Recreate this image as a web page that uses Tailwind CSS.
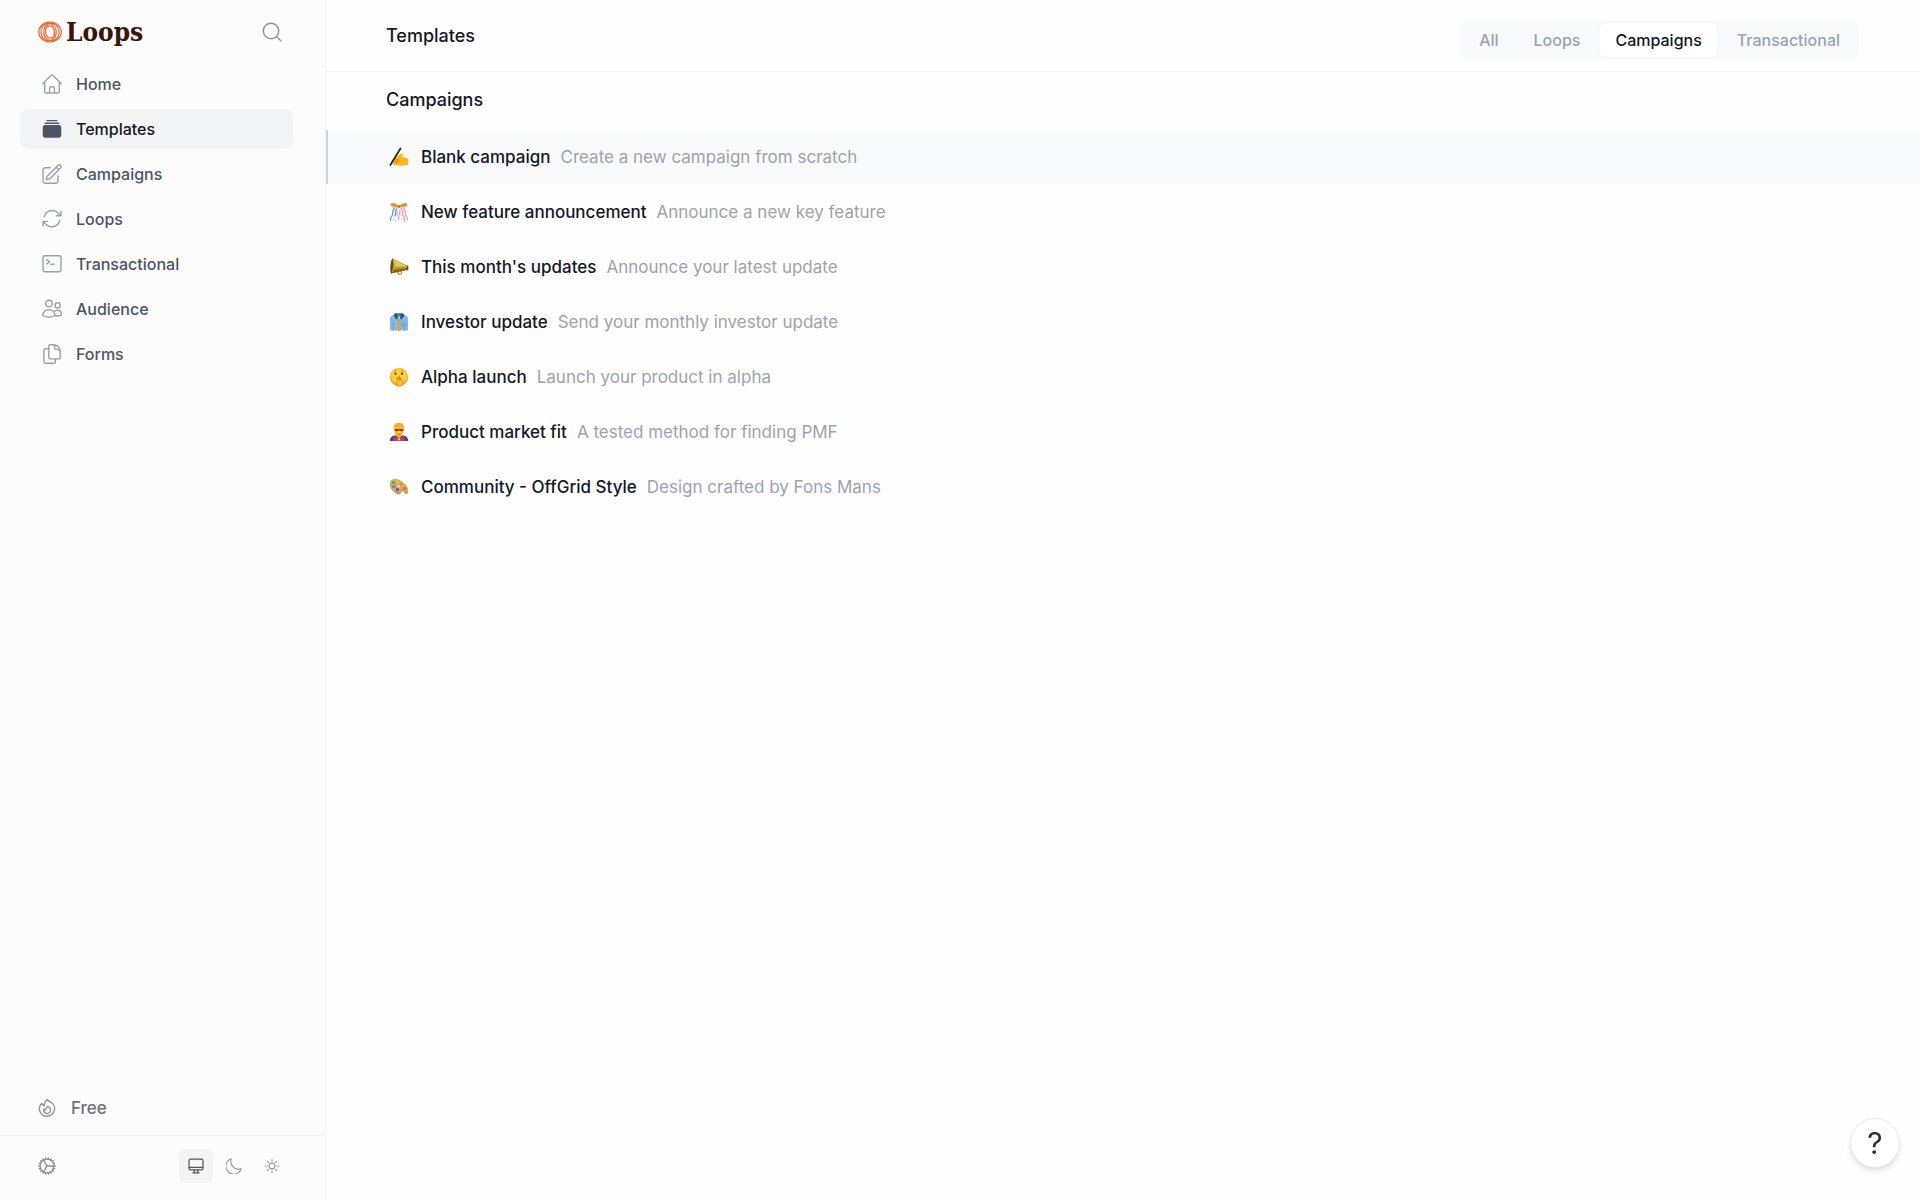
<!DOCTYPE html>
<html lang="en">
<head>
    <meta charset="UTF-8">
    <meta name="viewport" content="width=device-width, initial-scale=1.0">
    <title>Templates - Loops</title>
    <script src="https://cdn.jsdelivr.net/npm/@tailwindcss/browser@4"></script>
</head>
<body class="flex min-h-screen bg-[#fefefe] font-['Inter',sans-serif] text-[17px] leading-6 font-medium text-[#111827]">

    <!-- Sidebar -->
    <aside class="flex w-[326px] shrink-0 flex-col border-r border-[#f3f4f6] bg-[#fcfcfd]">
        <div class="flex h-16 items-center justify-between pl-[38px] pr-9">
            <a href="#" class="flex items-center gap-1">
                <svg class="h-6 w-6" viewBox="0 0 24 24" fill="none" stroke="#ea6229" stroke-width="1.2">
                    <ellipse cx="12" cy="12" rx="11.3" ry="10"/>
                    <ellipse cx="10.6" cy="12" rx="7.700" ry="8.800" transform="rotate(-8 10.6 12)"/>
                    <ellipse cx="13.4" cy="12" rx="7.700" ry="8.800" transform="rotate(-8 13.4 12)"/>
                    <ellipse cx="12" cy="12" rx="4.500" ry="6.200" transform="rotate(-10 12 12)"/>
                </svg>
                <span class="font-['DejaVu_Serif_Condensed','DejaVu_Serif',serif] text-[26px] font-bold text-[#3b1408]">Loops</span>
            </a>
            <button type="button" aria-label="Search" class="flex h-[34px] w-[34px] items-center justify-center text-[#9095a0]">
                <svg class="h-5 w-5" viewBox="0 0 20 20" fill="none" stroke="currentColor" stroke-width="1.5" stroke-linecap="round">
                    <circle cx="9" cy="9" r="7.7"/><path d="m14.5 14.5 4.3 4.3"/>
                </svg>
            </button>
        </div>

        <nav class="flex flex-col gap-[5px] pl-5 pr-8 text-base text-[#4b5563]">
            <a href="#" class="flex h-10 items-center gap-[14px] rounded-lg px-[22px]">
                <svg class="h-5 w-5 text-[#9ca0ab]" viewBox="0 0 20 20" fill="none" stroke="currentColor" stroke-width="1.4" stroke-linecap="round" stroke-linejoin="round">
                    <path d="m.8 9.7 8.4-8.4a1.1 1.1 0 0 1 1.6 0l8.4 8.4M2.7 8v9.8c0 .7.5 1.2 1.2 1.2h12.2c.7 0 1.2-.5 1.2-1.2V8M7.6 19v-5.1c0-.6.5-1.1 1.1-1.1h2.6c.6 0 1.1.5 1.1 1.1V19"/>
                </svg>
                Home
            </a>
            <a href="#" class="flex h-10 items-center gap-[14px] rounded-lg bg-[#f3f4f6] px-[22px] text-[#111827]">
                <svg class="h-5 w-5" viewBox="0 0 20 20" fill="#4b5565">
                    <rect x="4.5" y="1" width="11" height="1.2" rx=".6"/>
                    <rect x="2.5" y="3.5" width="15" height="1.4" rx=".7"/>
                    <rect x=".7" y="6.1" width="18.6" height="12.6" rx="2.7"/>
                </svg>
                Templates
            </a>
            <a href="#" class="flex h-10 items-center gap-[14px] rounded-lg px-[22px]">
                <svg class="h-5 w-5 text-[#9ca0ab]" viewBox="0 0 20 20" fill="none" stroke="currentColor" stroke-width="1.4" stroke-linecap="round" stroke-linejoin="round">
                    <path d="M8.3 3.8H3.2A2.2 2.2 0 0 0 1 6v11a2.2 2.2 0 0 0 2.2 2.2h10.6A2.2 2.2 0 0 0 16 17v-5"/>
                    <path d="M15.9 1.5a1.8 1.8 0 0 1 2.6 2.6L8.7 13.9a5 5 0 0 1-1.8 1.1l-2.8.9.9-2.8a5 5 0 0 1 1.1-1.8zM14.2 3.2l2.6 2.6"/>
                </svg>
                Campaigns
            </a>
            <a href="#" class="flex h-10 items-center gap-[14px] rounded-lg px-[22px]">
                <svg class="h-5 w-5 text-[#9ca0ab]" viewBox="0 0 20 20" fill="none" stroke="currentColor" stroke-width="1.4" stroke-linecap="round" stroke-linejoin="round">
                    <path d="M19 2.2v4.6h-4.6M19 6.8l-2.8-2.8A8.2 8.2 0 0 0 2.3 7.8M1 17v-4.6h4.6M1 12.4l2.8 2.9a8.2 8.2 0 0 0 13.9-3.8"/>
                </svg>
                Loops
            </a>
            <a href="#" class="flex h-10 items-center gap-[14px] rounded-lg px-[22px]">
                <svg class="h-5 w-5 text-[#9ca0ab]" viewBox="0 0 20 20" fill="none" stroke="currentColor" stroke-width="1.4" stroke-linecap="round" stroke-linejoin="round">
                    <rect x="1" y="1.8" width="18" height="16" rx="2"/><path d="m4.7 5.8 2.7 2.1L4.7 10M8.8 10.3h3.4"/>
                </svg>
                Transactional
            </a>
            <a href="#" class="flex h-10 items-center gap-[14px] rounded-lg px-[22px]">
                <svg class="h-5 w-5 text-[#9ca0ab]" viewBox="0 0 20 20" fill="none" stroke="currentColor" stroke-width="1.4" stroke-linecap="round" stroke-linejoin="round">
                    <circle cx="7" cy="4.5" r="3.3"/><circle cx="15.6" cy="6.4" r="2.6"/>
                    <path d="M.8 16.5c0-3.3 2.8-5.8 6.1-5.8s6.1 2.5 6.1 5.8c-1.7 1.2-3.8 1.7-6.1 1.700s-4.400-.5-6.100-1.700zM11.8 12.900c1-1.100 2.300-1.600 3.600-1.600 2.400 0 4.100 1.800 4.100 4.500-1.800 1.100-4.200 1.400-6.500 1"/>
                </svg>
                Audience
            </a>
            <a href="#" class="flex h-10 items-center gap-[14px] rounded-lg px-[22px]">
                <svg class="h-5 w-5 text-[#9ca0ab]" viewBox="0 0 20 20" fill="none" stroke="currentColor" stroke-width="1.4" stroke-linecap="round" stroke-linejoin="round">
                    <path d="M6.8 4.7H3.1c-.7 0-1.2.5-1.2 1.2v12.2c0 .7.5 1.2 1.2 1.2h9.1c.7 0 1.2-.5 1.2-1.2v-3.2"/>
                    <path d="M11.4.7H8c-.7 0-1.2.5-1.2 1.2v11.8c0 .7.5 1.2 1.2 1.2h9c.7 0 1.2-.5 1.2-1.2V7.500A6.800 6.800 0 0 0 11.400.7zM11.300.7c1 .5 1.400 1.100 1.400 2.400v1.100c0 .7.500 1.200 1.200 1.200H15c1.600 0 2.700.6 3.200 2.100"/>
                </svg>
                Forms
            </a>
        </nav>

        <div class="mt-auto">
            <a href="#" class="mb-[7px] flex h-10 items-center gap-[13px] pl-9 text-[#6b7280]">
                <svg class="h-[22px] w-[22px] text-[#8d929e]" viewBox="0 0 24 24" fill="none" stroke="currentColor" stroke-width="1.5" stroke-linecap="round" stroke-linejoin="round">
                    <path d="M15.362 5.214A8.252 8.252 0 0 1 12 21 8.250 8.250 0 0 1 6.038 7.047 8.287 8.287 0 0 0 9 9.601a8.983 8.983 0 0 1 3.361-6.867 8.210 8.210 0 0 0 3 2.480z"/>
                    <path d="M12 18a3.750 3.750 0 0 0 .495-7.468 5.990 5.990 0 0 0-1.925 3.547 5.975 5.975 0 0 1-2.133-1.001A3.750 3.750 0 0 0 12 18z"/>
                </svg>
                Free
            </a>
            <div class="flex h-[65px] items-center justify-between border-t border-[#f0f1f3] pb-1 pl-9 pr-9">
                <button type="button" aria-label="Settings" class="text-[#858a96]">
                    <svg class="h-[22px] w-[22px]" viewBox="0 0 24 24" fill="none" stroke="currentColor" stroke-width="1.5" stroke-linecap="round" stroke-linejoin="round">
                        <path d="M4.500 12a7.500 7.500 0 0 0 15 0m-15 0a7.500 7.500 0 1 1 15 0m-15 0H3m16.500 0H21m-1.500 0H12m-8.457 3.077 1.410-.513m14.095-5.130 1.410-.513M5.106 17.785l1.150-.964m11.490-9.642 1.149-.964M7.501 19.795l.750-1.300m7.500-12.990.750-1.300m-6.063 16.658.260-1.477m2.605-14.772.260-1.477m0 17.726-.260-1.477M10.698 4.614l-.260-1.477M16.500 19.794l-.750-1.299M7.500 4.205 12 12m6.894 5.785-1.149-.964M6.256 7.178l-1.150-.964m15.352 8.864-1.410-.513M4.954 9.435l-1.410-.514M12.002 12l-3.750 6.495"/>
                    </svg>
                </button>
                <div class="flex gap-1 text-[#9095a0]">
                    <button type="button" aria-label="System theme" class="flex h-[34px] w-[34px] items-center justify-center rounded-md bg-[#f3f4f6] text-[#4b5563]">
                        <svg class="h-4 w-4" viewBox="0 0 16 16" fill="none" stroke="currentColor" stroke-width="1.2" stroke-linejoin="round" stroke-linecap="round">
                            <rect x="1" y="1.2" width="14" height="10.6" rx="1.6"/><path d="M1.2 9.300h13.600M6.300 12v2.600M9.700 12v2.600M4.800 14.800h6.400"/>
                        </svg>
                    </button>
                    <button type="button" aria-label="Dark theme" class="flex h-[34px] w-[34px] items-center justify-center">
                        <svg class="h-4 w-4" viewBox="0 0 16 16" fill="none" stroke="currentColor" stroke-width="1.1" stroke-linejoin="round">
                            <path d="M15.3 10.8A7.9 7.9 0 1 1 5.2.8a7.900 7.900 0 0 0 10.100 10z"/>
                        </svg>
                    </button>
                    <button type="button" aria-label="Light theme" class="flex h-[34px] w-[34px] items-center justify-center">
                        <svg class="h-4 w-4" viewBox="0 0 16 16" fill="none" stroke="currentColor" stroke-width="1.1" stroke-linecap="round">
                            <circle cx="8" cy="8" r="2.9"/><path d="M8 1.300v1.900M8 12.800v1.900M1.300 8h1.900M12.800 8h1.900M3.300 3.300l1.300 1.300M11.400 11.400l1.300 1.300M3.300 12.700l1.300-1.300M11.400 4.600l1.300-1.300"/>
                        </svg>
                    </button>
                </div>
            </div>
        </div>
    </aside>

    <!-- Content -->
    <main class="min-w-0 flex-1">
        <header class="flex items-start justify-between border-b border-[#f3f4f6] pb-[11px] pl-[60px] pr-[61px] pt-5">
            <h1 class="pt-1 text-lg leading-6">Templates</h1>
            <div class="flex gap-[3px] rounded-lg bg-[#f9fafb] p-[3px] text-base text-[#9ca3af]">
                <button type="button" class="h-[34px] rounded-md px-4">All</button>
                <button type="button" class="h-[34px] rounded-md px-4">Loops</button>
                <button type="button" class="h-[34px] rounded-md bg-white px-4 text-[#111827] shadow-[0_0_2px_rgba(0,0,0,0.1)]">Campaigns</button>
                <button type="button" class="h-[34px] rounded-md px-4">Transactional</button>
            </div>
        </header>

        <h2 class="pb-[18px] pl-[60px] pt-4 text-lg leading-6">Campaigns</h2>

        <ul class="flex flex-col gap-px">
            <li>
                <a href="#" class="flex h-[54px] items-center border-l-2 border-[#cbd5e1] bg-[#f9fafb] pl-[61px]">
                    <svg class="mr-3 h-5 w-5" viewBox="0 0 20 20">
                        <path d="M4 13.5 8 9.300c1-1 2.100-1.500 3.200-2.100 1.300-.7 2.500-1 3.100-.3.500.7-.6 1.500-1.900 2.300 2 .4 3.600 1.200 6.900 2.300v5.400c-2.500.9-5.800 1.100-9 1-3-.1-5.300-.4-6.700-1.600z" fill="#fbb920"/>
                        <path d="m5.500 13 3.800-.5c1.400-.2 1.700 1.200.4 1.400l-3.200.6M6 15.500l3.700-.5" fill="none" stroke="#de8510" stroke-width=".9" stroke-linecap="round"/>
                        <path d="M4 16.800c3 1.400 10 1.500 15.300.1v.6c-4.500 1.300-12 1.400-14.800.1z" fill="#e58e12"/>
                        <path d="M11.500 1.500 3.600 14.300 1.400 18" stroke="#20232a" stroke-width="1.7" stroke-linecap="round"/>
                    </svg>
                    Blank campaign
                    <span class="ml-[10px] font-normal text-[#9ca3af]">Create a new campaign from scratch</span>
                </a>
            </li>
            <li>
                <a href="#" class="flex h-[54px] items-center border-l-2 border-transparent pl-[61px]">
                    <svg class="mr-3 h-5 w-5" viewBox="0 0 20 20" fill="none" stroke-linecap="round">
                        <path d="M5.500 6C2.500 9 5 11 2.800 14s-.8 3-1.300 4.500M8 6.500c-3.500 3 .5 5-2.300 7.500" stroke="#4c8fe8" stroke-width="1.1"/>
                        <path d="M14.500 6c3 3 .5 5 2.700 8s.5 3 1 4M12 6.500c3.500 3-.5 5 2.300 7.500s-.6 3 1.200 4.800" stroke="#ee8795" stroke-width="1.1"/>
                        <path d="M7 8c3 1.500-.5 3.500 2 5.500s-.5 3 .8 4.500M10.500 8c2 2-1.500 3.500.5 5.500" stroke="#e36c9a" stroke-width=".9"/>
                        <path d="M4.700 17.500v.1M8 15.500v.1M12.300 16.500v.1M6.700 18.800v.1" stroke="#7ab5ef" stroke-width="1.2"/>
                        <path d="M10 4.500C7 .3 2 .4 1.400 2.300.9 4.300 5.500 7 10 4.500zM10 4.500c3-4.200 8-4.100 8.600-2.200.5 2-4.100 4.700-8.600 2.200z" fill="#eda545"/>
                        <path d="M3 2.700c2-.6 4 .2 5.500 1.500M17 2.700c-2-.6-4 .2-5.500 1.500" stroke="#b96820" stroke-width=".7"/>
                        <circle cx="10" cy="4.5" r="1.6" fill="#c9771f"/>
                    </svg>
                    New feature announcement
                    <span class="ml-[10px] font-normal text-[#9ca3af]">Announce a new key feature</span>
                </a>
            </li>
            <li>
                <a href="#" class="flex h-[54px] items-center border-l-2 border-transparent pl-[61px]">
                    <svg class="mr-3 h-5 w-5" viewBox="0 0 20 20">
                        <path d="m8.500 14 .4 2c.4 1.700 3.800 1.500 3.700-.2l-.3-2.600" fill="none" stroke="#ac8b24" stroke-width="1.2"/>
                        <path d="M3.500 1.600 19.200 9v3.800L1.800 16.500z" fill="#b5982a"/>
                        <path d="M4.500 2.500 18.800 9.400l-12.300.4z" fill="#e1ca52"/>
                        <path d="M3 13.200 19.200 11v1.800L1.800 16.500z" fill="#7b6418"/>
                        <ellipse cx="3.1" cy="9" rx="1.7" ry="7.500" transform="rotate(5 3.1 9)" fill="#5b4a16"/>
                        <path d="M4 2.500c1.500 4 1 9-.9 12.800" fill="none" stroke="#e1c84c" stroke-width=".8"/>
                        <path d="m17.800 8.600 1.400.6v3.500l-1.400.3z" fill="#54471b"/>
                    </svg>
                    This month's updates
                    <span class="ml-[10px] font-normal text-[#9ca3af]">Announce your latest update</span>
                </a>
            </li>
            <li>
                <a href="#" class="flex h-[54px] items-center border-l-2 border-transparent pl-[61px]">
                    <svg class="mr-3 h-5 w-5" viewBox="0 0 20 20">
                        <path d="M6 2.500 2.500 4C1.500 4.500 1 5.500 1 6.500v12h18v-12c0-1-.5-2-1.500-2.500L14 2.500z" fill="#82b9eb"/>
                        <path d="M4.200 10v8.500M15.800 10v8.500" stroke="#5b94cf" stroke-width=".8"/>
                        <path d="M12.500 11h3.800v3.500h-3.800z" fill="#70a7dd"/>
                        <path d="M6 1.200h8l1.500 2.300-3 4.200L10 4.800 7.500 7.700l-3-4.200z" fill="#245987"/>
                        <path d="M7 1.200h6L10 4.600z" fill="#4f8dbb"/>
                        <path d="M8.600 4.300h2.800l-.5 2.500 1.600 8.500v3.200h-5v-3.200l1.600-8.500z" fill="#d9bd79"/>
                        <path d="m8.600 9.500 2.500-2M8 13l3.800-3M7.600 16.500l4.400-3.700M9 18.500l3.500-3" stroke="#886d38" stroke-width=".8"/>
                    </svg>
                    Investor update
                    <span class="ml-[10px] font-normal text-[#9ca3af]">Send your monthly investor update</span>
                </a>
            </li>
            <li>
                <a href="#" class="flex h-[54px] items-center border-l-2 border-transparent pl-[61px]">
                    <svg class="mr-3 h-5 w-5" viewBox="0 0 20 20">
                        <circle cx="10" cy="10" r="9.2" fill="#f8ab21"/>
                        <circle cx="10" cy="9" r="8" fill="#ffcf3c"/>
                        <ellipse cx="6.5" cy="6.6" rx=".9" ry="1.3" fill="#633b18"/>
                        <ellipse cx="13" cy="6.6" rx=".9" ry="1.3" fill="#633b18"/>
                        <path d="M4.800 4.300c.7-.8 1.600-1 2.500-.8M12.200 3.500c1-.2 1.900.1 2.500.8" fill="none" stroke="#a96a1b" stroke-width=".6" stroke-linecap="round"/>
                        <path d="M7.700 11.700c1.300-.8 3-.8 4.300 0" fill="none" stroke="#80420f" stroke-width="1"/>
                        <path d="M9.100 9.800c0-1.100 1.600-1.100 1.600 0v3.400c1.400-.8 3.200-.2 3.500 1.200.4 2-1.200 4.600-3.700 4.600-2 0-3.300-1.400-3.200-3.200.1-1.200.8-1.800 1.800-2.300z" fill="#ffc12c" stroke="#cd790d" stroke-width=".7"/>
                    </svg>
                    Alpha launch
                    <span class="ml-[10px] font-normal text-[#9ca3af]">Launch your product in alpha</span>
                </a>
            </li>
            <li>
                <a href="#" class="flex h-[54px] items-center border-l-2 border-transparent pl-[61px]">
                    <svg class="mr-3 h-5 w-5" viewBox="0 0 20 20">
                        <path d="M.7 19c.2-3.500 2-5 5-5.500h8.600c3 .5 4.800 2 5 5.500z" fill="#60358d"/>
                        <path d="M5 14.200 10 17l5-2.800L16 19H4z" fill="#d43654"/>
                        <path d="M8 12h4v3l-2 1.500L8 15z" fill="#e29a1d"/>
                        <path d="M5.200 7.500c0-4 2-5.300 4.800-5.300s4.800 1.300 4.800 5.300c0 4.500-2.200 7-4.800 7s-4.800-2.500-4.800-7z" fill="#fdc228"/>
                        <path d="M4.900 8.200C4 3.500 6 .8 10 .8s6 2.700 5.100 7.400c-.5-1.700-.8-3-1.600-3.700-2 .8-5 .8-7 0-.8.700-1.100 2-1.600 3.700z" fill="#eab32f"/>
                        <path d="M5.200 7.300c3-.5 6.600-.5 9.600 0-.1 2-3.200 2.900-4.800 1-1.600 1.900-4.700 1-4.800-1z" fill="#bf2c42"/>
                        <path d="M6.800 7.900h1.600M11.600 7.900h1.600" stroke="#4a2518" stroke-width=".9"/>
                        <path d="M8.300 12c1.100.7 2.300.7 3.400 0" fill="none" stroke="#a75c14" stroke-width=".8"/>
                        <path d="m8.500 17 1.500-1 1.500 1-1.500 1.700z" fill="#f6dc6a"/>
                    </svg>
                    Product market fit
                    <span class="ml-[10px] font-normal text-[#9ca3af]">A tested method for finding PMF</span>
                </a>
            </li>
            <li>
                <a href="#" class="flex h-[54px] items-center border-l-2 border-transparent pl-[61px]">
                    <svg class="mr-3 h-5 w-5" viewBox="0 0 20 20">
                        <path d="M1 7.300C1 3.600 4 2 7.500 2.600c5.500.9 11.500 6.500 11.700 11.400.1 2.500-1.600 3.400-3 2.500-1-.7-1-2.200-2.200-2.600-1.900-.5-1.300 2-2.600 2.900C8.200 18.700 1 13 1 7.300z" fill="#a87638"/>
                        <path d="M1 6.500C1 3.200 4 1.600 7.500 2.200c5.500.9 11.500 6.500 11.700 11.100.1 2.300-1.600 3.200-3 2.300-1-.7-1-2.200-2.200-2.600-1.900-.5-1.300 2-2.600 2.900C8.200 17.800 1 12.200 1 6.500z" fill="#d6a964"/>
                        <circle cx="4.500" cy="5.500" r="1.600" fill="#54a950"/>
                        <circle cx="8.600" cy="5" r="1.400" fill="#e5c936"/>
                        <circle cx="12.300" cy="7.500" r="1.400" fill="#e58e36"/>
                        <circle cx="15.600" cy="11.500" r="1.500" fill="#df6258"/>
                        <circle cx="4.800" cy="9.500" r="1.600" fill="#3b91c8"/>
                        <circle cx="8.500" cy="12.700" r="1.800" fill="#7854aa"/>
                        <ellipse cx="9.700" cy="9.300" rx="1.300" ry=".9" transform="rotate(35 9.700 9.300)" fill="#f5efe3"/>
                    </svg>
                    Community - OffGrid Style
                    <span class="ml-[10px] font-normal text-[#9ca3af]">Design crafted by Fons Mans</span>
                </a>
            </li>
        </ul>
    </main>

    <!-- Help button -->
    <button type="button" aria-label="Help" class="fixed bottom-8 right-5 flex h-[50px] w-[50px] items-center justify-center rounded-full border border-gray-200 bg-white text-3xl font-normal text-[#273142] shadow-md">?</button>
</body>
</html>
